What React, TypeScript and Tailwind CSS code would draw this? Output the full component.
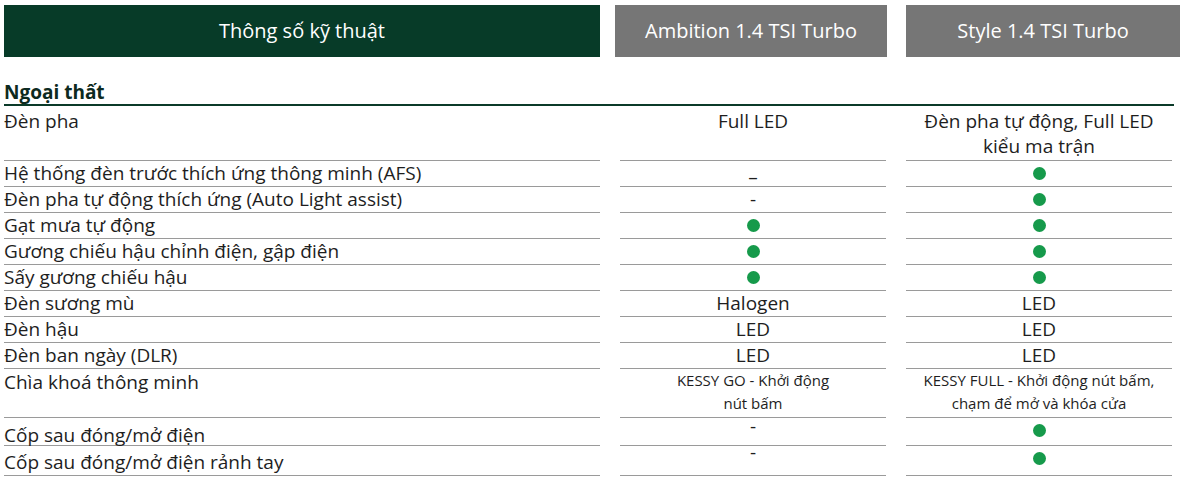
import React from "react";

type Cell = React.ReactNode;

const Dot = () => <span className="inline-block w-[13px] h-[13px] rounded-full bg-[#169a4b]" />;

const rows: { label: string; h: string; lpt: string; a: Cell; b: Cell; vpt: string }[] = [
  {
    label: "Đèn pha",
    h: "h-[55px]",
    lpt: "pt-[3px]",
    vpt: "pt-[3px]",
    a: <span>Full LED</span>,
    b: (
      <span className="leading-[25px] block">
        Đèn pha tự động, Full LED
        <br />
        kiểu ma trận
      </span>
    ),
  },
  { label: "Hệ thống đèn trước thích ứng thông minh (AFS)", h: "h-[26px]", lpt: "pt-[0px]", vpt: "pt-[0px]", a: <span className="relative top-[4px] leading-[16px]">–</span>, b: <Dot /> },
  { label: "Đèn pha tự động thích ứng (Auto Light assist)", h: "h-[26px]", lpt: "pt-[0px]", vpt: "pt-[0px]", a: <span>-</span>, b: <Dot /> },
  { label: "Gạt mưa tự động", h: "h-[26px]", lpt: "pt-[0px]", vpt: "pt-[0px]", a: <Dot />, b: <Dot /> },
  { label: "Gương chiếu hậu chỉnh điện, gập điện", h: "h-[26px]", lpt: "pt-[0px]", vpt: "pt-[0px]", a: <Dot />, b: <Dot /> },
  { label: "Sấy gương chiếu hậu", h: "h-[26px]", lpt: "pt-[0px]", vpt: "pt-[0px]", a: <Dot />, b: <Dot /> },
  { label: "Đèn sương mù", h: "h-[26px]", lpt: "pt-[0px]", vpt: "pt-[0px]", a: <span>Halogen</span>, b: <span>LED</span> },
  { label: "Đèn hậu", h: "h-[26px]", lpt: "pt-[0px]", vpt: "pt-[0px]", a: <span>LED</span>, b: <span>LED</span> },
  { label: "Đèn ban ngày (DLR)", h: "h-[26px]", lpt: "pt-[0px]", vpt: "pt-[0px]", a: <span>LED</span>, b: <span>LED</span> },
  {
    label: "Chìa khoá thông minh",
    h: "h-[49px]",
    lpt: "pt-[1px]",
    vpt: "pt-[0px]",
    a: (
      <span className="block text-[15px] leading-[23px]">
        KESSY GO - Khởi động
        <br />
        nút bấm
      </span>
    ),
    b: (
      <span className="block text-[15px] leading-[23px]">
        KESSY FULL - Khởi động nút bấm,
        <br />
        chạm để mở và khóa cửa
      </span>
    ),
  },
  { label: "Cốp sau đóng/mở điện", h: "h-[28px]", lpt: "pt-[5px]", vpt: "pt-[0px]", a: <span className="relative top-[-4px]">-</span>, b: <Dot /> },
  { label: "Cốp sau đóng/mở điện rảnh tay", h: "h-[30px]", lpt: "pt-[4px]", vpt: "pt-[0px]", a: <span className="relative top-[-6px]">-</span>, b: <Dot /> },
];

export default function App() {
  return (
    <div
      className="w-[1187px] h-[483px] bg-white pl-[4px] pt-[5px] text-[#1e1e1e] overflow-hidden"
      style={{ fontFamily: '"Open Sans", "Noto Sans", sans-serif' }}
    >
      <div className="flex h-[52px]">
        <div className="w-[596px] bg-[#073b28] text-white text-[20px] flex items-center justify-center">
          Thông số kỹ thuật
        </div>
        <div className="ml-[15px] w-[272px] bg-[#767676] text-white text-[20px] flex items-center justify-center">
          Ambition 1.4 TSI Turbo
        </div>
        <div className="ml-[19px] w-[274px] bg-[#767676] text-white text-[20px] flex items-center justify-center">
          Style 1.4 TSI Turbo
        </div>
      </div>

      <div className="w-[1170px] mt-[23px] border-b-2 border-[#0b3a29] h-[26px] text-[19px] font-bold leading-[24px] text-[#0d2a20]">
        Ngoại thất
      </div>

      <div className="grid grid-cols-[596px_266px_266px] gap-x-[20px] w-[1170px] text-[19px]">
        {rows.map((r, i) => (
          <React.Fragment key={i}>
            <div className={`${r.h} ${r.lpt} border-b border-[#9a9a9a] leading-[24px]`}>{r.label}</div>
            <div className={`${r.h} ${r.vpt} border-b border-[#9a9a9a] leading-[24px] flex justify-center items-start text-center`}>
              <div className="min-h-[24px] flex items-center justify-center">{r.a}</div>
            </div>
            <div className={`${r.h} ${r.vpt} border-b border-[#9a9a9a] leading-[24px] flex justify-center items-start text-center`}>
              <div className="min-h-[24px] flex items-center justify-center">{r.b}</div>
            </div>
          </React.Fragment>
        ))}
      </div>
    </div>
  );
}
